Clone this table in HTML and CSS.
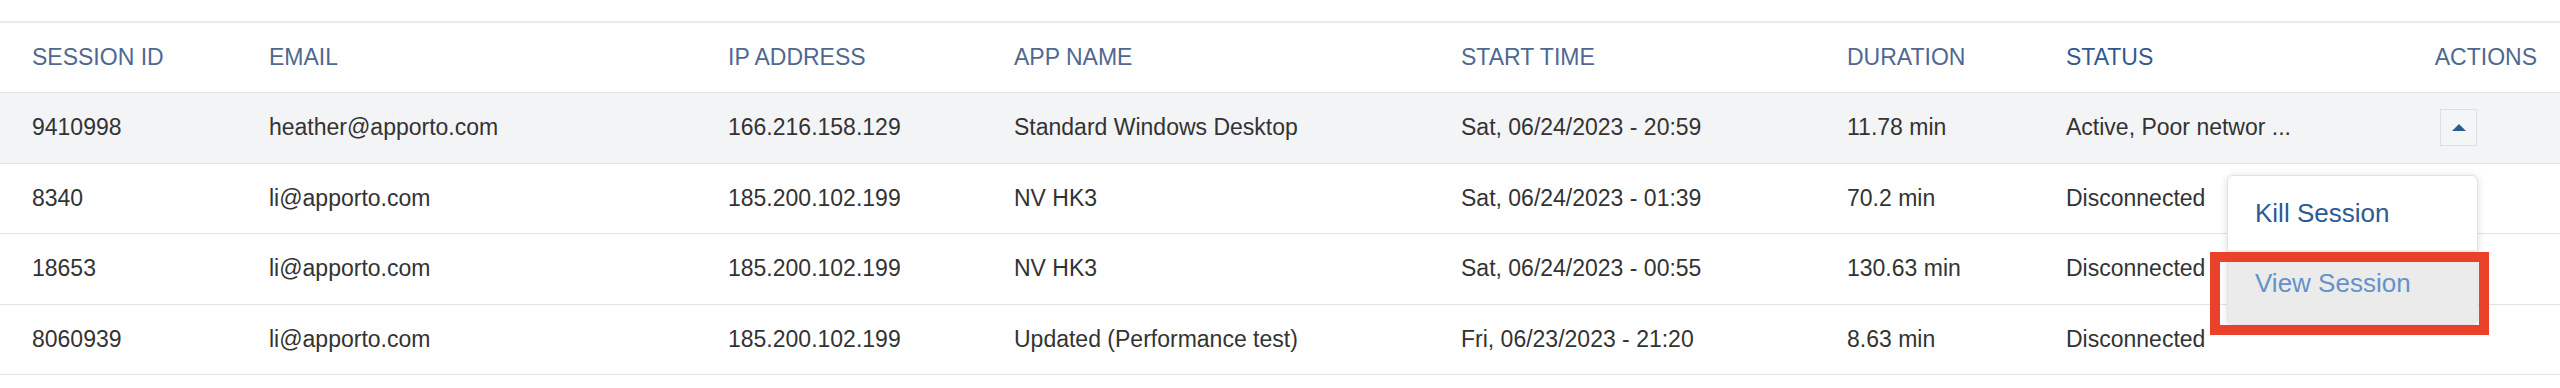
FILE: index.html
```html
<!DOCTYPE html>
<html lang="en">
<head>
<meta charset="utf-8">
<title>Sessions</title>
<link rel="stylesheet" href="styles.css">
</head>
<body>
<div class="page">
  <div class="table">
    <div class="row head">
      <div class="cell first">SESSION ID</div>
      <div class="cell">EMAIL</div>
      <div class="cell">IP ADDRESS</div>
      <div class="cell">APP NAME</div>
      <div class="cell">START TIME</div>
      <div class="cell">DURATION</div>
      <div class="cell sorted">STATUS</div>
      <div class="cell actions-head">ACTIONS</div>
    </div>
    <div class="row active">
      <div class="cell first">9410998</div>
      <div class="cell">heather@apporto.com</div>
      <div class="cell">166.216.158.129</div>
      <div class="cell">Standard Windows Desktop</div>
      <div class="cell">Sat, 06/24/2023 - 20:59</div>
      <div class="cell">11.78 min</div>
      <div class="cell">Active, Poor networ ...</div>
      <div class="cell actions">
        <div class="menu-anchor">
          <button class="toggle" type="button" aria-label="Actions">
            <svg width="14" height="7" viewBox="0 0 14 7"><polygon points="7,0 14,7 0,7" fill="#2c5a96"/></svg>
          </button>
          <div class="menu">
            <div class="item">Kill Session</div>
            <div class="item hover">View Session</div>
            <div class="highlight"></div>
          </div>
        </div>
      </div>
    </div>
    <div class="row">
      <div class="cell first">8340</div>
      <div class="cell">li@apporto.com</div>
      <div class="cell">185.200.102.199</div>
      <div class="cell">NV HK3</div>
      <div class="cell">Sat, 06/24/2023 - 01:39</div>
      <div class="cell">70.2 min</div>
      <div class="cell">Disconnected</div>
      <div class="cell"></div>
    </div>
    <div class="row">
      <div class="cell first">18653</div>
      <div class="cell">li@apporto.com</div>
      <div class="cell">185.200.102.199</div>
      <div class="cell">NV HK3</div>
      <div class="cell">Sat, 06/24/2023 - 00:55</div>
      <div class="cell">130.63 min</div>
      <div class="cell">Disconnected</div>
      <div class="cell"></div>
    </div>
    <div class="row">
      <div class="cell first">8060939</div>
      <div class="cell">li@apporto.com</div>
      <div class="cell">185.200.102.199</div>
      <div class="cell">Updated (Performance test)</div>
      <div class="cell">Fri, 06/23/2023 - 21:20</div>
      <div class="cell">8.63 min</div>
      <div class="cell">Disconnected</div>
      <div class="cell"></div>
    </div>
  </div>
</div>
</body>
</html>
```

FILE: styles.css
```css
* { box-sizing: border-box; }
html, body { margin: 0; padding: 0; background: #ffffff; }
body {
  font-family: "Liberation Sans", Arial, Helvetica, sans-serif;
  font-size: 23px;
  color: #333333;
}
.page { padding-top: 21px; }
.table { border-top: 2px solid #e8eaee; }
.row {
  display: grid;
  grid-template-columns: 269px 459px 286px 447px 386px 219px 334px 1fr;
  height: 70.5px;
  border-bottom: 1px solid #e0e3e7;
  align-items: center;
}
.row.head { height: 70px; }
.row.active { background: #f3f4f6; }
.cell { white-space: nowrap; }
.cell.first { padding-left: 32px; }
.head .cell { color: #4f6891; }
.head .cell.sorted { color: #2e5a91; }
.actions-head { text-align: right; padding-right: 23px; }
.actions {
  display: flex;
  justify-content: flex-end;
  padding-right: 83px;
}
.menu-anchor { position: relative; }
.toggle {
  display: flex;
  align-items: center;
  justify-content: center;
  width: 37px;
  height: 37px;
  padding: 0;
  border: 1px solid #dcdfe3;
  background: #f4f5f7;
  cursor: pointer;
}
.menu {
  position: absolute;
  top: 66px;
  right: -1px;
  width: 251px;
  background: #ffffff;
  border: 1px solid #e3e3e3;
  border-radius: 6px;
  box-shadow: 0 1px 8px rgba(0, 0, 0, 0.13);
  font-size: 26px;
  z-index: 5;
}
.item {
  height: 74px;
  display: flex;
  align-items: center;
  padding-left: 27px;
  color: #2d5a94;
}
.item.hover {
  background: #ebebeb;
  color: #6592c8;
  padding-bottom: 8px;
  border-radius: 0 0 5px 5px;
}
.highlight {
  position: absolute;
  left: -18px;
  top: 76px;
  width: 279px;
  height: 83px;
  border: 10px solid #e9412a;
}
```
